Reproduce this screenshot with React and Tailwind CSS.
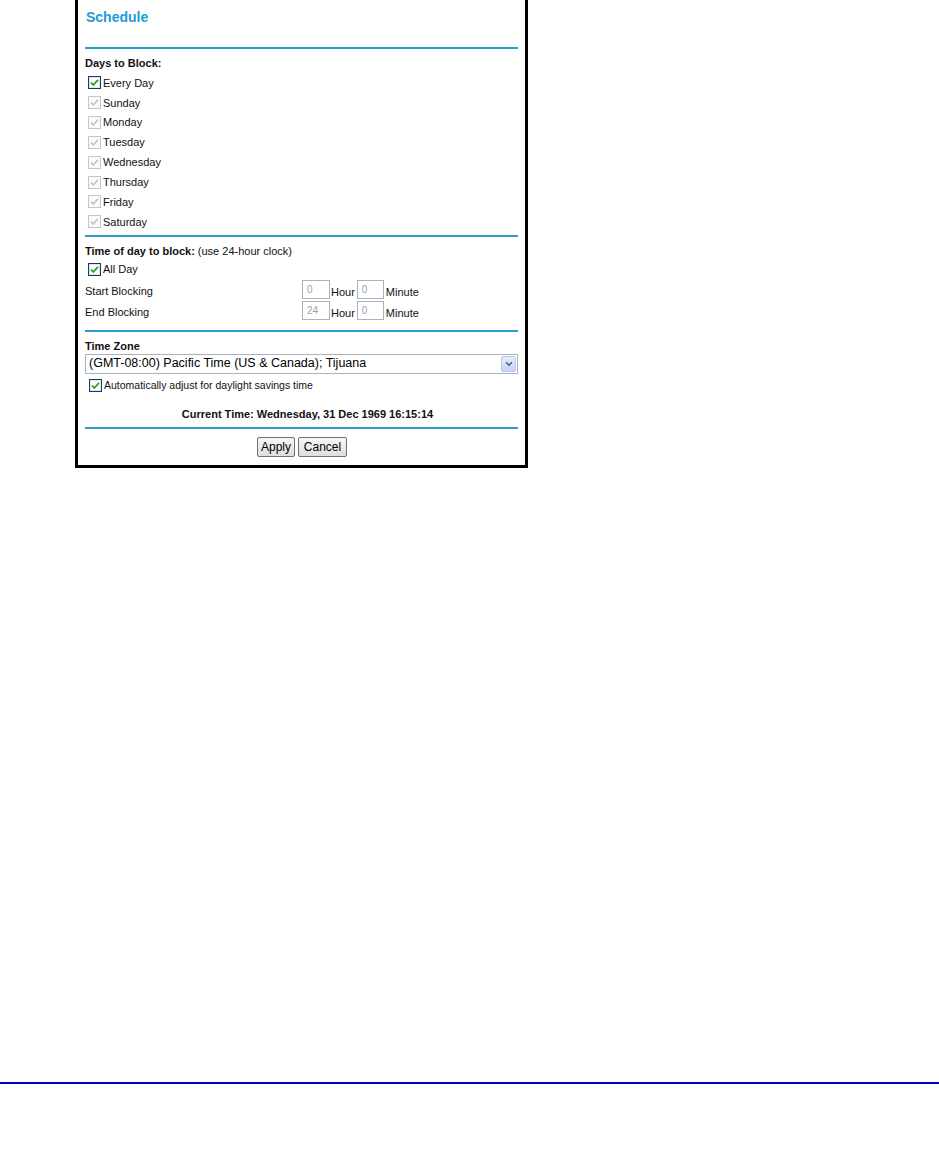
import React from "react";

function Check({ enabled }) {
  return enabled ? (
    <svg width="13" height="13" viewBox="0 0 13 13" className="shrink-0">
      <rect x="0.5" y="0.5" width="12" height="12" fill="#fff" stroke="#1e3a64" />
      <rect x="1.5" y="1.5" width="10" height="10" fill="none" stroke="#dde4ec" />
      <path d="M3 6.5 L5.3 9 L10 3.8" fill="none" stroke="#21a121" strokeWidth="1.8" />
    </svg>
  ) : (
    <svg width="13" height="13" viewBox="0 0 13 13" className="shrink-0">
      <rect x="0.5" y="0.5" width="12" height="12" fill="#fbfbfb" stroke="#c6c6c6" />
      <path d="M3 6.5 L5.3 9 L10 3.8" fill="none" stroke="#bcbcbc" strokeWidth="1.4" />
    </svg>
  );
}

function CheckRow({ label, enabled, h = "h-[19.85px]" }) {
  return (
    <div className={`${h} flex items-center pl-[3px] gap-[2px]`}>
      <Check enabled={enabled} />
      <span>{label}</span>
    </div>
  );
}

function Line({ className = "" }) {
  return <div className={`h-[2px] bg-[#2b9dcb] ${className}`} />;
}

function TimeInput({ value, w }) {
  return (
    <div
      className={`${w} h-[19px] border border-[#a9b3bf] bg-white flex items-center pl-[4px] text-[10px] text-[#a0a0a0]`}
    >
      {value}
    </div>
  );
}

function TimeRow({ label, hour }) {
  return (
    <div className="h-[21px] grid grid-cols-[217px_1fr] items-center">
      <span className="pt-[3px]">{label}</span>
      <div className="flex items-center">
        <TimeInput value={hour} w="w-[28px]" />
        <span className="ml-[1px] mr-[2px] mt-[5px]">Hour</span>
        <TimeInput value="0" w="w-[27px]" />
        <span className="ml-[2px] mt-[5px]">Minute</span>
      </div>
    </div>
  );
}

export default function App() {
  const days = ["Sunday", "Monday", "Tuesday", "Wednesday", "Thursday", "Friday", "Saturday"];
  return (
    <div
      className="w-[939px] h-[1153px] bg-white text-[11px] text-[#111] flex flex-col"
      style={{ fontFamily: '"Liberation Sans", Arial, sans-serif' }}
    >
      <div className="ml-[75px] w-[453px] border-x-[3px] border-b-[3px] border-black px-[7px] pb-[8px]">
        <div className="h-[47px] pt-[9px] pl-[1px] text-[14px] font-bold text-[#1d9bd6] leading-[16px]">
          Schedule
        </div>
        <Line />
        <div className="mt-[5px] h-[19px] flex items-center font-bold">Days to Block:</div>
        <CheckRow label="Every Day" enabled />
        {days.map((d) => (
          <CheckRow key={d} label={d} enabled={false} />
        ))}
        <Line className="mt-[3px]" />
        <div className="mt-[5px] h-[18px] flex items-center">
          <span className="font-bold">Time of day to block:</span>
          <span className="ml-[3px]">(use 24-hour clock)</span>
        </div>
        <CheckRow label="All Day" enabled h="h-[19px]" />
        <TimeRow label="Start Blocking" hour="0" />
        <TimeRow label="End Blocking" hour="24" />
        <Line className="mt-[9px]" />
        <div className="h-[22px] pt-[7px] flex items-center font-bold">Time Zone</div>
        <div className="h-[20px] border border-[#a9b3bf] bg-white flex items-center justify-between pl-[3px] pr-[1px]">
          <span className="text-[12.5px] text-black">(GMT-08:00) Pacific Time (US &amp; Canada); Tijuana</span>
          <div className="w-[15px] h-[16px] rounded-[2px] border border-[#b7c8e6] bg-gradient-to-b from-[#e6eefc] to-[#c3d4f3] flex items-center justify-center">
            <svg width="8" height="6" viewBox="0 0 8 6">
              <path d="M1 1.2 L4 4.2 L7 1.2" fill="none" stroke="#4d6185" strokeWidth="1.6" />
            </svg>
          </div>
        </div>
        <div className="mt-[2px] h-[20px] flex items-center pl-[4px] gap-[2px] text-[10.5px]">
          <Check enabled />
          <span>Automatically adjust for daylight savings time</span>
        </div>
        <div className="mt-[8px] h-[20px] flex items-center justify-center pl-[12px] font-bold">
          Current Time: Wednesday, 31 Dec 1969 16:15:14
        </div>
        <Line className="mt-[3px]" />
        <div className="mt-[8px] flex justify-center gap-[3px] pl-[1px]">
          <button className="w-[38px] h-[20px] border border-[#707070] rounded-[2px] bg-gradient-to-b from-[#f7f7f7] to-[#dedede] text-[12px] text-black leading-none">
            Apply
          </button>
          <button className="w-[49px] h-[20px] border border-[#707070] rounded-[2px] bg-gradient-to-b from-[#f7f7f7] to-[#dedede] text-[12px] text-black leading-none">
            Cancel
          </button>
        </div>
      </div>
      <div className="mt-auto mb-[69px] h-[2px] bg-[#0000c0]" />
    </div>
  );
}
